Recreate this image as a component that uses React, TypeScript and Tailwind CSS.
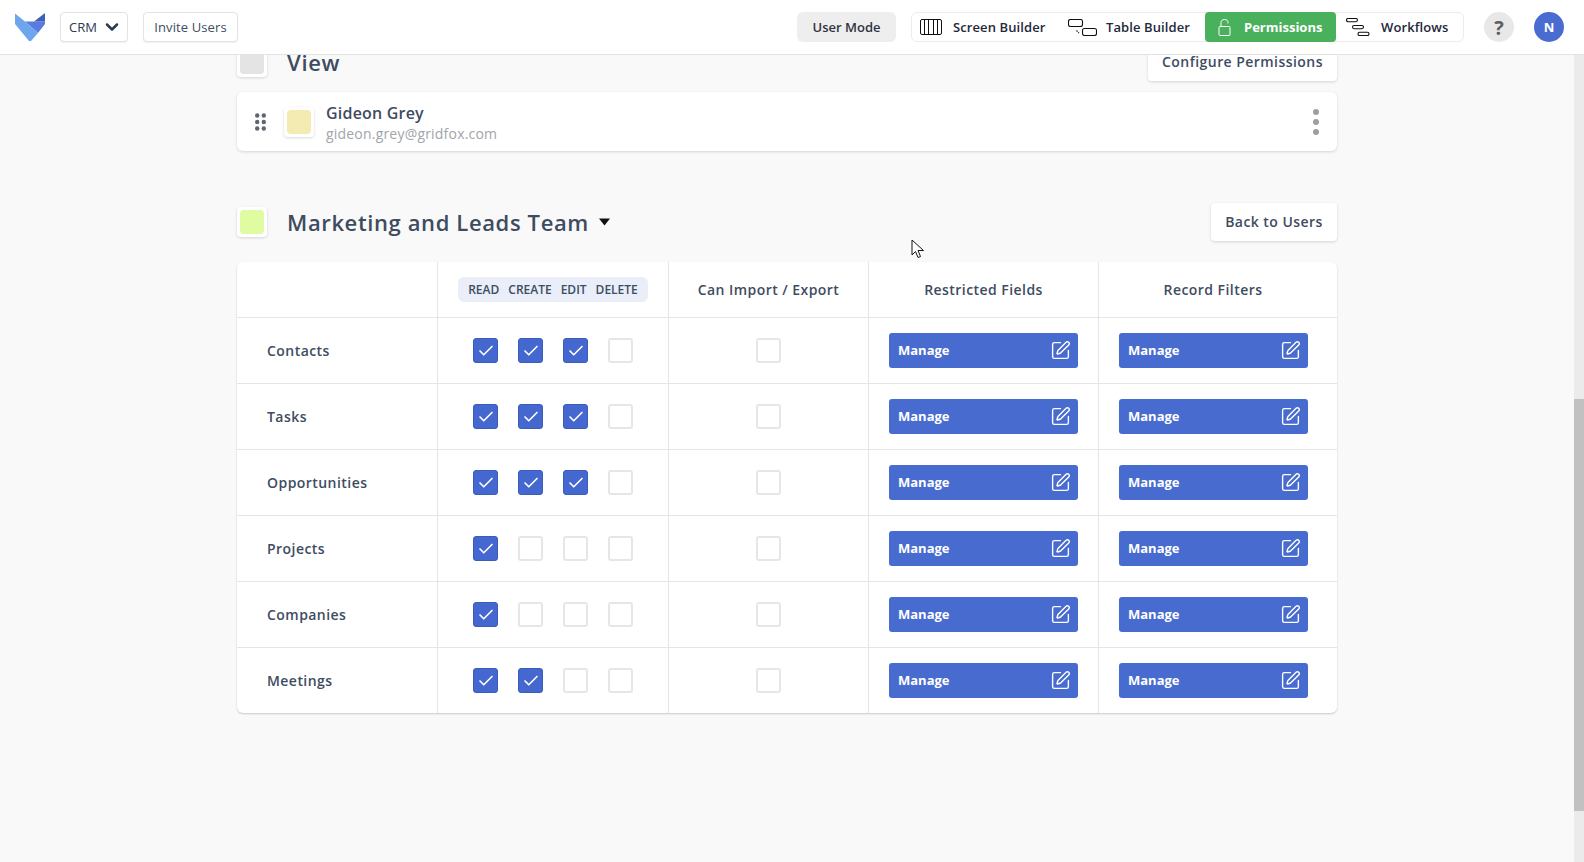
import { Check, ChevronDown, SquarePen } from "lucide-react";

const rows = [
  { name: "Contacts", perms: [true, true, true, false] },
  { name: "Tasks", perms: [true, true, true, false] },
  { name: "Opportunities", perms: [true, true, true, false] },
  { name: "Projects", perms: [true, false, false, false] },
  { name: "Companies", perms: [true, false, false, false] },
  { name: "Meetings", perms: [true, true, false, false] },
];

function Logo() {
  return (
    <svg width="30" height="28" viewBox="0 0 30 28">
      <path d="M10 8.5H30V11L23 20Z" fill="#5a7be0" />
      <path d="M19 8.5L30 0V8.5Z" fill="#3f5fb8" />
      <path d="M0 0.5L10 8.5L23 20L16 28H14L0 11Z" fill="#6ea6ee" />
    </svg>
  );
}

function ScreenIcon() {
  return (
    <svg width="22" height="16" viewBox="0 0 22 16" fill="none" stroke="#111" strokeWidth="1">
      <rect x="0.5" y="0.5" width="21" height="15" rx="1.5" />
      <path d="M4.5 0.5V15.5M8.5 0.5V15.5M13.5 0.5V15.5M17.5 0.5V15.5" />
    </svg>
  );
}

function TableIcon() {
  return (
    <svg width="29" height="17" viewBox="0 0 29 17" fill="none" stroke="#111" strokeWidth="1.1">
      <rect x="0.5" y="0.5" width="14" height="7" rx="2" />
      <rect x="14.5" y="9.5" width="14" height="7" rx="2" />
      <path d="M8.5 11.5 L11 14" strokeDasharray="1.5 1" />
    </svg>
  );
}

function LockIcon() {
  return (
    <svg width="13" height="17" viewBox="0 0 13 17" fill="none" stroke="#fff" strokeWidth="1">
      <rect x="1" y="7.5" width="11" height="9" rx="1" />
      <path d="M3 7.5V3.5C3 1.5 4.5 0.5 6.5 0.5C8.5 0.5 10 1.5 10 3.5V4.5" />
    </svg>
  );
}

function FlowIcon() {
  return (
    <svg width="24" height="18" viewBox="0 0 24 18" fill="none" stroke="#111" strokeWidth="1.1">
      <rect x="0.5" y="0.5" width="11" height="3.2" rx="1.6" />
      <rect x="6.5" y="7.5" width="11" height="3.2" rx="1.6" />
      <rect x="12" y="14.3" width="11" height="3.2" rx="1.6" />
    </svg>
  );
}

function Swatch({ color }: { color: string }) {
  return (
    <div className="w-[30px] h-[30px] p-[3px] bg-white rounded shadow-[0_1px_3px_rgba(0,0,0,0.15)]">
      <div className="w-full h-full rounded" style={{ backgroundColor: color }} />
    </div>
  );
}

function Box({ checked }: { checked: boolean }) {
  if (checked) {
    return (
      <div className="w-[25px] h-[25px] rounded-[3px] bg-[#4468cf] border border-[#3b5cb8] flex items-center justify-center">
        <Check size={18} color="#fff" strokeWidth={2.2} />
      </div>
    );
  }
  return <div className="w-[25px] h-[25px] rounded-[3px] bg-white border-2 border-[#e6e6e6]" />;
}

function ManageButton() {
  return (
    <button className="w-[189px] h-[35px] pl-[9px] pr-[7px] rounded-[3px] bg-[#486bd0] text-white text-[13px] font-bold tracking-normal flex items-center justify-between">
      Manage
      <SquarePen size={21} color="#fff" strokeWidth={1.6} />
    </button>
  );
}

export default function App() {
  return (
    <div className="h-screen overflow-hidden flex flex-col bg-[#f9f9f9] text-[#3e4c5f] font-['Open_Sans',sans-serif] relative">
      <header className="h-[55px] shrink-0 relative z-10 bg-white border-b border-[#e3e3e3] flex items-center pl-[15px] pr-5">
        <Logo />
        <button className="ml-[15px] w-[68px] h-[30px] pl-[8px] pr-[5px] bg-white rounded border border-[#e3e3e3] shadow-[0_1px_1px_rgba(0,0,0,0.06)] flex items-center justify-between text-[13px] text-[#2c3a52]">
          <span className="pt-px">CRM</span>
          <ChevronDown size={20} strokeWidth={3} color="#2c3a52" />
        </button>
        <button className="ml-[15px] w-[95px] h-[30px] pt-px bg-white rounded border border-[#e3e3e3] shadow-[0_1px_1px_rgba(0,0,0,0.06)] text-[13px] tracking-[0.1px] text-[#3e4c5f]">
          Invite Users
        </button>
        <button className="ml-auto w-[99px] h-[30px] pt-px rounded-md bg-[#eeeeee] text-[13px] font-semibold text-[#2e3342]">
          User Mode
        </button>
        <div className="ml-[15px] w-[553px] h-[30px] rounded-md border border-[#ececec] flex items-center text-[13px] font-semibold text-[#23283a] whitespace-nowrap">
          <div className="w-[156px] shrink-0 flex items-center pl-[8px] gap-[11px] tracking-[0.1px]">
            <ScreenIcon />
            <span className="pt-px">Screen Builder</span>
          </div>
          <div className="w-[137px] shrink-0 flex items-center gap-[9px] tracking-[0.1px]">
            <TableIcon />
            <span className="pt-px">Table Builder</span>
          </div>
          <div className="w-[131px] shrink-0 h-[30px] rounded bg-[#49b05c] text-white font-bold flex items-center pl-[13px] gap-[13px]">
            <LockIcon />
            <span className="pt-px">Permissions</span>
          </div>
          <div className="flex items-center pl-[10px] gap-[11px] tracking-[0.1px]">
            <FlowIcon />
            <span className="pt-px">Workflows</span>
          </div>
        </div>
        <div className="ml-5 w-[30px] h-[30px] pt-px rounded-full bg-[#e8e8e8] flex items-center justify-center text-[20px] font-bold text-[#5f5f5f]">
          ?
        </div>
        <div className="ml-5 w-[30px] h-[30px] pt-px rounded-full bg-[#4a6cd0] flex items-center justify-center text-[13px] font-bold text-white">
          N
        </div>
      </header>

      <div className="flex-1 flex min-h-0">
        <main className="flex-1 overflow-hidden flex justify-center">
          <div className="w-[1100px] -mt-[12px] shrink-0">
            <div className="h-[38px] flex items-center justify-between">
              <div className="flex items-center gap-[20px]">
                <Swatch color="#e4e4e4" />
                <h2 className="text-[22px] leading-[14px] font-semibold tracking-[0.7px]">View</h2>
              </div>
              <button className="w-[189px] h-[38px] bg-white rounded leading-[12px] shadow-[0_1px_3px_rgba(0,0,0,0.15)] text-sm font-semibold tracking-[0.45px]">
                Configure Permissions
              </button>
            </div>

            <div className="mt-[11px] h-[59px] bg-white rounded-md shadow-[0_1px_3px_rgba(0,0,0,0.15)] flex items-center pl-[18px] pr-[18px]">
              <svg width="11" height="18" viewBox="0 0 11 18" fill="#5f6670">
                <circle cx="2.2" cy="2.5" r="2.2" /><circle cx="8.8" cy="2.5" r="2.2" />
                <circle cx="2.2" cy="9" r="2.2" /><circle cx="8.8" cy="9" r="2.2" />
                <circle cx="2.2" cy="15.5" r="2.2" /><circle cx="8.8" cy="15.5" r="2.2" />
              </svg>
              <div className="ml-[18px]">
                <Swatch color="#f4ebb2" />
              </div>
              <div className="ml-[12px] flex-1 pt-[2px] tracking-[0.2px]">
                <div className="text-base font-semibold leading-[22px]">Gideon Grey</div>
                <div className="text-sm leading-[19px] text-[#a1a5ab]">gideon.grey@gridfox.com</div>
              </div>
              <svg width="6" height="26" viewBox="0 0 6 26" fill="#9e9e9e">
                <circle cx="3" cy="3" r="3" /><circle cx="3" cy="13" r="3" /><circle cx="3" cy="23" r="3" />
              </svg>
            </div>

            <div className="mt-[52px] h-[38px] flex items-center justify-between">
              <div className="flex items-center">
                <Swatch color="#dffca0" />
                <h1 className="ml-[20px] text-[22px] font-semibold tracking-[0.62px] pt-px">Marketing and Leads Team</h1>
                <svg className="ml-[10px]" width="11" height="8" viewBox="0 0 11 8" fill="#111">
                  <path d="M0 0.5H11L5.5 7.5Z" />
                </svg>
              </div>
              <button className="w-[126px] h-[38px] bg-white rounded shadow-[0_1px_3px_rgba(0,0,0,0.15)] text-sm font-semibold tracking-[0.45px]">
                Back to Users
              </button>
            </div>

            <div className="mt-[21px] bg-white rounded-md shadow-[0_1px_2px_rgba(0,0,0,0.2)] text-sm font-semibold tracking-[0.45px]">
              <div className="h-[56px] flex items-stretch border-b border-[#e5e5e5]">
                <div className="w-[201px] border-r border-[#e5e5e5]" />
                <div className="w-[231px] border-r border-[#e5e5e5] flex items-center justify-center">
                  <div className="w-[190px] h-[25px] rounded-md bg-[#e9eef9] flex items-center justify-center gap-[9px] text-xs tracking-normal">
                    <span>READ</span>
                    <span>CREATE</span>
                    <span>EDIT</span>
                    <span>DELETE</span>
                  </div>
                </div>
                <div className="w-[200px] border-r border-[#e5e5e5] pt-px flex items-center justify-center">Can Import / Export</div>
                <div className="w-[230px] border-r border-[#e5e5e5] pt-px flex items-center justify-center">Restricted Fields</div>
                <div className="flex-1 pt-px flex items-center justify-center pr-[10px]">Record Filters</div>
              </div>
              {rows.map((row, i) => (
                <div
                  key={row.name}
                  className={i < rows.length - 1 ? "h-[66px] flex items-stretch border-b border-[#e5e5e5]" : "h-[65px] flex items-stretch"}
                >
                  <div className="w-[201px] border-r border-[#e5e5e5] pl-[30px] pt-px flex items-center">{row.name}</div>
                  <div className="w-[231px] border-r border-[#e5e5e5] flex items-center justify-center gap-5">
                    {row.perms.map((on, j) => (
                      <Box key={j} checked={on} />
                    ))}
                  </div>
                  <div className="w-[200px] border-r border-[#e5e5e5] flex items-center justify-center">
                    <Box checked={false} />
                  </div>
                  <div className="w-[230px] border-r border-[#e5e5e5] flex items-center justify-center">
                    <ManageButton />
                  </div>
                  <div className="flex-1 flex items-center pl-[20px]">
                    <ManageButton />
                  </div>
                </div>
              ))}
            </div>
          </div>
        </main>
        <div className="w-[10px] shrink-0 bg-[#ebebeb] pt-[344px]">
          <div className="h-[412px] bg-[#c1c1c1]" />
        </div>
      </div>

      <svg className="absolute left-[911px] top-[239px]" width="14" height="20" viewBox="0 0 14 20" fill="#fff" stroke="#111" strokeWidth="1">
        <path d="M1 1V16L4.5 12.5L7 18.5L9.5 17.5L7 11.5H12.5Z" />
      </svg>
    </div>
  );
}
